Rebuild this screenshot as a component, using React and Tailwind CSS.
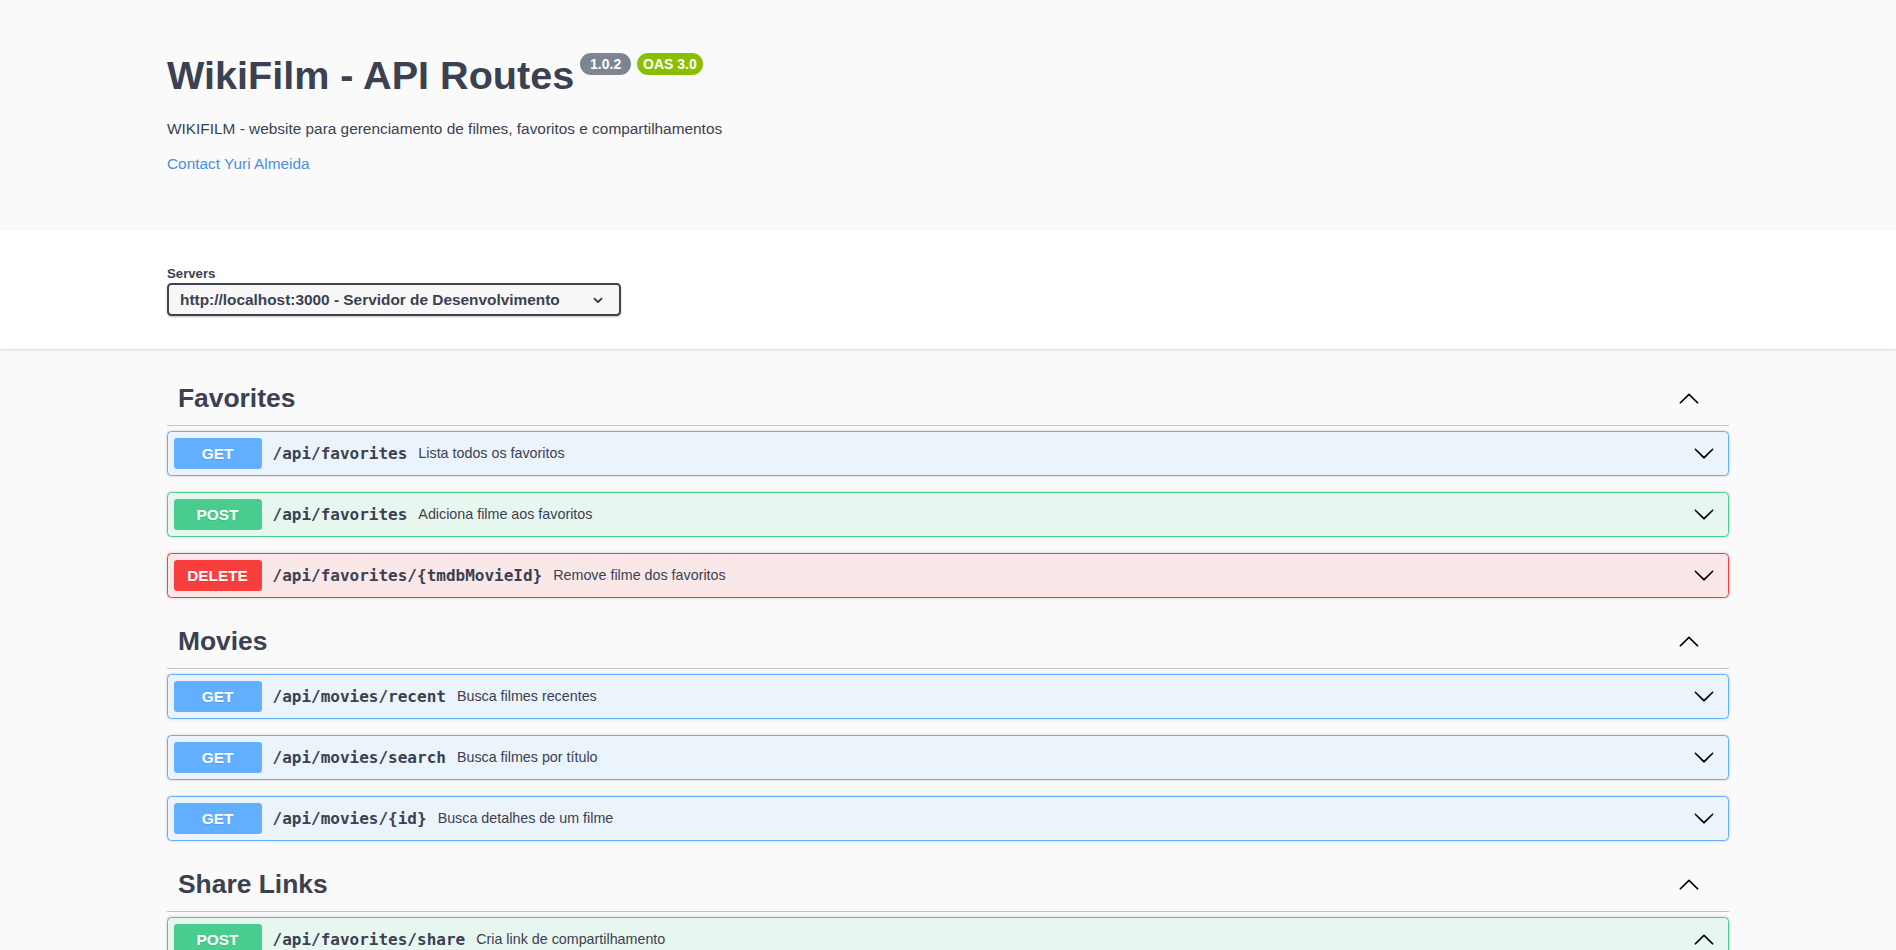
import React from "react";

const SANS = "font-['Liberation_Sans',Arial,sans-serif]";
const MONO = "font-['DejaVu_Sans_Mono','Liberation_Mono',monospace]";

function ChevronDown({ className = "" }) {
  return (
    <svg viewBox="0 0 20 20" className={className} fill="currentColor" aria-hidden="true">
      <path d="M17.418 6.109c.272-.268.709-.268.979 0s.271.701 0 .969l-7.908 7.83c-.27.268-.707.268-.979 0l-7.908-7.83c-.27-.268-.27-.701 0-.969.271-.268.709-.268.979 0L10 13.25l7.418-7.141z" />
    </svg>
  );
}

function ChevronUp({ className = "" }) {
  return (
    <svg viewBox="0 0 20 20" className={className} fill="currentColor" aria-hidden="true">
      <path d="M17.418 14.908c.272.268.709.268.979 0s.271-.701 0-.969l-7.908-7.83c-.27-.268-.707-.268-.979 0l-7.908 7.83c-.27.268-.27.701 0 .969.271.268.709.268.979 0L10 7.767l7.418 7.141z" />
    </svg>
  );
}

const METHOD = {
  GET: { row: "border-[#61affe] bg-[#ebf3fb]", badge: "bg-[#61affe]" },
  POST: { row: "border-[#49cc90] bg-[#e8f6f0]", badge: "bg-[#49cc90]" },
  DELETE: { row: "border-[#f93e3e] bg-[#fae7e7]", badge: "bg-[#f93e3e]" },
};

function Operation({ method, path, desc, open = false }) {
  const m = METHOD[method];
  return (
    <div
      className={`mb-[16.5px] rounded-[4.4px] border shadow-[0_0_3px_rgba(0,0,0,0.19)] ${m.row}`}
    >
      <div className="flex h-[42.5px] items-center px-[5.5px]">
        <span
          className={`flex h-[31px] w-[88px] shrink-0 items-center justify-center rounded-[3.3px] text-[15.4px] font-bold text-white [text-shadow:0_1px_0_rgba(0,0,0,0.1)] ${SANS} ${m.badge}`}
        >
          {method}
        </span>
        <span className={`mt-[1px] px-[11px] text-[16px] font-bold text-[#3b4151] ${MONO}`}>{path}</span>
        <span className={`text-[14.3px] text-[#3b4151] ${SANS}`}>{desc}</span>
        <div className="flex-1" />
        {open ? (
          <ChevronUp className="mr-[7.5px] h-[22px] w-[22px] text-black" />
        ) : (
          <ChevronDown className="mr-[7.5px] h-[22px] w-[22px] text-black" />
        )}
      </div>
      {open && <div className="h-[60px] border-t border-[#49cc90]" />}
    </div>
  );
}

function Tag({ name, children }) {
  return (
    <section>
      <div className="mb-[5.5px] flex h-[54.5px] items-center border-b border-[#c4c6cb] pl-[11px] pr-[29px]">
        <h3 className={`mt-[3px] text-[26.4px] font-bold text-[#3b4151] ${SANS}`}>{name}</h3>
        <div className="flex-1" />
        <ChevronUp className="h-[22px] w-[22px] text-black" />
      </div>
      {children}
    </section>
  );
}

export default function App() {
  return (
    <div className={`h-screen overflow-hidden bg-[#fafafa] ${SANS}`}>
      {/* Info */}
      <div className="mx-auto w-[1562px] pt-[52px] pb-[56px]">
        <div className="flex items-start">
          <h2 className="text-[39.6px] font-bold leading-[46px] text-[#3b4151]">
            WikiFilm - API Routes
          </h2>
          <span className="ml-[6px] mt-[1px] whitespace-pre rounded-full bg-[#7d8492] px-[6px] py-[2px] text-[14px] font-bold leading-[18px] text-white">
            {" 1.0.2 "}
          </span>
          <span className="ml-[6px] mt-[1px] rounded-full bg-[#89bf04] px-[6px] py-[2px] text-[14px] font-bold leading-[18px] text-white">
            OAS 3.0
          </span>
        </div>
        <p className="mt-[21px] text-[15.4px] leading-[20px] text-[#3b4151]">
          WIKIFILM - website para gerenciamento de filmes, favoritos e compartilhamentos
        </p>
        <p className="mt-[15px] text-[15.4px] leading-[20px] text-[#4990e2]">Contact Yuri Almeida</p>
      </div>

      {/* Servers */}
      <div className="bg-white pt-[36px] pb-[33px] shadow-[0_1px_2px_0_rgba(0,0,0,0.15)]">
        <div className="mx-auto w-[1562px]">
          <div className="text-[13.2px] font-bold leading-[16px] text-[#3b4151]">Servers</div>
          <div className="mt-[1px] flex h-[33px] w-[454px] items-center rounded-[4.4px] border-2 border-[#41444e] bg-[#f7f7f7] pl-[11px] pr-[14px] shadow-[0_1px_2px_0_rgba(0,0,0,0.25)]">
            <span className="text-[15.4px] font-bold text-[#3b4151]">
              http://localhost:3000 - Servidor de Desenvolvimento
            </span>
            <div className="flex-1" />
            <svg viewBox="0 0 20 20" className="h-[14px] w-[14px] text-[#333]" aria-hidden="true">
              <path d="M5 8l5 5 5-5" fill="none" stroke="currentColor" strokeWidth="2.6" strokeLinecap="round" strokeLinejoin="round" />
            </svg>
          </div>
        </div>
      </div>

      {/* Operations */}
      <div className="mx-auto w-[1562px] pt-[22px]">
        <Tag name="Favorites">
          <Operation method="GET" path="/api/favorites" desc="Lista todos os favoritos" />
          <Operation method="POST" path="/api/favorites" desc="Adiciona filme aos favoritos" />
          <Operation method="DELETE" path="/api/favorites/{tmdbMovieId}" desc="Remove filme dos favoritos" />
        </Tag>
        <Tag name="Movies">
          <Operation method="GET" path="/api/movies/recent" desc="Busca filmes recentes" />
          <Operation method="GET" path="/api/movies/search" desc="Busca filmes por título" />
          <Operation method="GET" path="/api/movies/{id}" desc="Busca detalhes de um filme" />
        </Tag>
        <Tag name="Share Links">
          <Operation method="POST" path="/api/favorites/share" desc="Cria link de compartilhamento" open />
        </Tag>
      </div>
    </div>
  );
}
